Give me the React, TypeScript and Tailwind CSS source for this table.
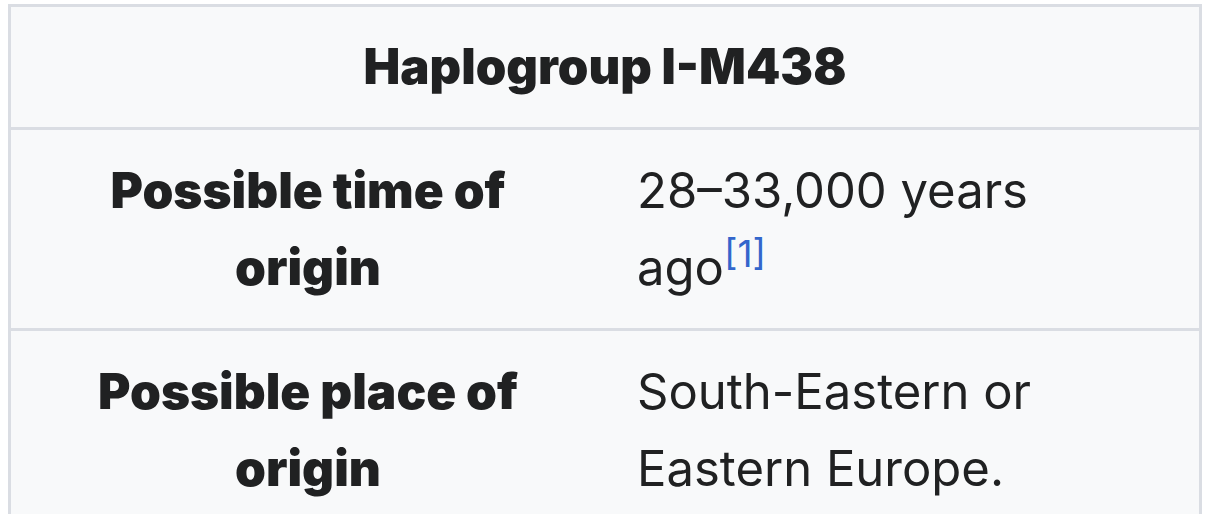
export default function App() {
  const rows = [
    {
      label: 'Possible time of origin',
      value: (
        <>
          28–33,000 years ago
          <sup className="text-[37px] text-[#3366cc]">[1]</sup>
        </>
      ),
    },
    { label: 'Possible place of origin', value: 'South-Eastern or Eastern Europe.' },
  ];

  return (
    <div className="min-h-screen bg-white pl-2 pt-1 font-['Inter',sans-serif] text-[#202122]">
      <div className="w-[1194px] border-[3px] border-b-0 border-[#dadde3] bg-[#f8f9fa]">
        <div className="py-[22px] text-center text-[49px] leading-[76px] font-black">
          Haplogroup I-M438
        </div>
        {rows.map((row) => (
          <div key={row.label} className="grid grid-cols-2 border-t-[3px] border-[#dadde3]">
            <div className="flex items-center justify-center px-8 py-[22px] text-center text-[49.5px] leading-[77px] font-black">
              {row.label}
            </div>
            <div className="px-8 py-[22px] text-[49px] leading-[77px]">{row.value}</div>
          </div>
        ))}
      </div>
    </div>
  );
}
